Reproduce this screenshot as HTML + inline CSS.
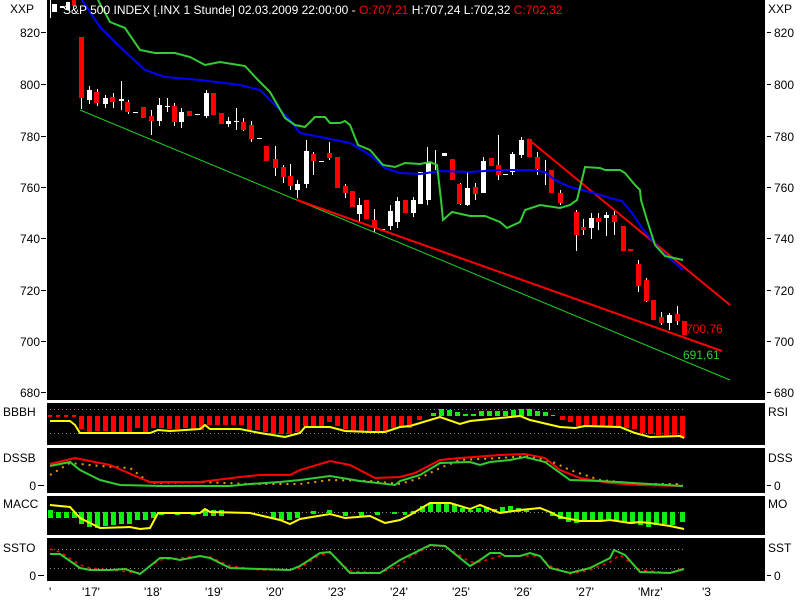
<!DOCTYPE html>
<html><head><meta charset="utf-8"><style>
html,body{margin:0;padding:0;background:#fff;width:800px;height:600px;overflow:hidden}
svg{display:block}
text{font-family:"Liberation Sans",sans-serif;font-size:12px}
</style></head><body>
<svg width="800" height="600" viewBox="0 0 800 600" xmlns="http://www.w3.org/2000/svg">
<rect width="800" height="600" fill="#fff"/>
<!-- panels -->
<rect x="47" y="0" width="718" height="400" fill="#000"/>
<rect x="47" y="403" width="718" height="42" fill="#000"/>
<rect x="47" y="448" width="718" height="45" fill="#000"/>
<rect x="47" y="496" width="718" height="39" fill="#000"/>
<rect x="47" y="538" width="718" height="43" fill="#000"/>

<!-- left axis labels -->
<g fill="#000" text-anchor="end">
<text x="40" y="37">820</text><text x="40" y="89">800</text><text x="40" y="141">780</text>
<text x="40" y="192">760</text><text x="40" y="243">740</text><text x="40" y="295">720</text>
<text x="40" y="346">700</text><text x="40" y="397">680</text>
<text x="36" y="580">0</text><text x="36" y="490">0</text>
</g>
<g stroke="#000" stroke-width="1">
<line x1="41" y1="32.5" x2="46" y2="32.5"/><line x1="41" y1="84.5" x2="46" y2="84.5"/><line x1="41" y1="136.5" x2="46" y2="136.5"/>
<line x1="41" y1="187.5" x2="46" y2="187.5"/><line x1="41" y1="238.5" x2="46" y2="238.5"/><line x1="41" y1="290.5" x2="46" y2="290.5"/>
<line x1="41" y1="341.5" x2="46" y2="341.5"/><line x1="41" y1="392.5" x2="46" y2="392.5"/>
<line x1="38" y1="575.5" x2="44" y2="575.5"/><line x1="38" y1="485.5" x2="44" y2="485.5"/>
<line x1="767" y1="32.5" x2="771" y2="32.5"/><line x1="767" y1="84.5" x2="771" y2="84.5"/><line x1="767" y1="136.5" x2="771" y2="136.5"/>
<line x1="767" y1="187.5" x2="771" y2="187.5"/><line x1="767" y1="238.5" x2="771" y2="238.5"/><line x1="767" y1="290.5" x2="771" y2="290.5"/>
<line x1="767" y1="341.5" x2="771" y2="341.5"/><line x1="767" y1="392.5" x2="771" y2="392.5"/>
<line x1="767" y1="575.5" x2="771" y2="575.5"/><line x1="767" y1="485.5" x2="771" y2="485.5"/>
</g>
<g fill="#000">
<text x="774" y="37">820</text><text x="774" y="89">800</text><text x="774" y="141">780</text>
<text x="774" y="192">760</text><text x="774" y="243">740</text><text x="774" y="295">720</text>
<text x="774" y="346">700</text><text x="774" y="397">680</text>
<text x="774" y="580">0</text><text x="774" y="490">0</text>
<text x="10" y="13">XXP</text><text x="768" y="13">XXP</text>
<text x="3" y="416">BBBH</text><text x="768" y="416">RSI</text>
<text x="3" y="462">DSSB</text><text x="768" y="462">DSS</text>
<text x="3" y="508">MACC</text><text x="768" y="508">MO</text>
<text x="3" y="552">SSTO</text><text x="768" y="552">SST</text>
<text x="82" y="596">'17'</text><text x="144" y="596">'18'</text><text x="205" y="596">'19'</text>
<text x="266" y="596">'20'</text><text x="328" y="596">'23'</text><text x="390" y="596">'24'</text>
<text x="452" y="596">'25'</text><text x="514" y="596">'26'</text><text x="576" y="596">'27'</text>
<text x="638" y="596">'Mrz'</text><text x="702" y="596">'3</text>
<text x="49" y="596">'</text>
</g>

<!-- candles wicks -->
<g stroke="#fff" stroke-width="1">
<line x1="50.5" y1="0" x2="50.5" y2="18"/><line x1="81.5" y1="37" x2="81.5" y2="109"/><line x1="89.5" y1="86" x2="89.5" y2="104"/>
<line x1="97.5" y1="89" x2="97.5" y2="106"/><line x1="105.5" y1="95" x2="105.5" y2="108"/><line x1="113.5" y1="93" x2="113.5" y2="108"/>
<line x1="121.5" y1="81" x2="121.5" y2="110"/><line x1="128.5" y1="100" x2="128.5" y2="114"/><line x1="151.5" y1="110" x2="151.5" y2="135"/>
<line x1="159.5" y1="98" x2="159.5" y2="126"/><line x1="167.5" y1="98" x2="167.5" y2="112"/><line x1="174.5" y1="103" x2="174.5" y2="126"/>
<line x1="181.5" y1="108" x2="181.5" y2="128"/><line x1="206.5" y1="90" x2="206.5" y2="118"/><line x1="228.5" y1="117" x2="228.5" y2="127"/>
<line x1="236.5" y1="108" x2="236.5" y2="130"/><line x1="243.5" y1="118" x2="243.5" y2="131"/><line x1="251.5" y1="121" x2="251.5" y2="142"/>
<line x1="275.5" y1="146" x2="275.5" y2="176"/><line x1="283.5" y1="165" x2="283.5" y2="183"/><line x1="290.5" y1="164" x2="290.5" y2="190"/>
<line x1="297.5" y1="180" x2="297.5" y2="198"/><line x1="306.5" y1="140" x2="306.5" y2="188"/><line x1="313.5" y1="152" x2="313.5" y2="175"/>
<line x1="329.5" y1="142" x2="329.5" y2="160"/><line x1="345.5" y1="184" x2="345.5" y2="198"/><line x1="359.5" y1="198" x2="359.5" y2="222"/>
<line x1="374.5" y1="209" x2="374.5" y2="232"/><line x1="390.5" y1="205" x2="390.5" y2="230"/><line x1="397.5" y1="197" x2="397.5" y2="228"/>
<line x1="413.5" y1="197" x2="413.5" y2="217"/><line x1="427.5" y1="147" x2="427.5" y2="205"/><line x1="435.5" y1="150" x2="435.5" y2="170"/>
<line x1="460.5" y1="183" x2="460.5" y2="205"/><line x1="467.5" y1="172" x2="467.5" y2="206"/><line x1="475.5" y1="183" x2="475.5" y2="200"/>
<line x1="483.5" y1="157" x2="483.5" y2="193"/><line x1="498.5" y1="135" x2="498.5" y2="180"/><line x1="512.5" y1="152" x2="512.5" y2="175"/>
<line x1="521.5" y1="137" x2="521.5" y2="158"/><line x1="537.5" y1="152" x2="537.5" y2="175"/><line x1="545.5" y1="160" x2="545.5" y2="185"/>
<line x1="560.5" y1="190" x2="560.5" y2="205"/><line x1="576.5" y1="210" x2="576.5" y2="251"/><line x1="583.5" y1="219" x2="583.5" y2="235"/>
<line x1="591.5" y1="213" x2="591.5" y2="239"/><line x1="598.5" y1="213" x2="598.5" y2="230"/><line x1="606.5" y1="212" x2="606.5" y2="236"/>
<line x1="614.5" y1="211" x2="614.5" y2="235"/><line x1="638.5" y1="260" x2="638.5" y2="292"/><line x1="646.5" y1="278" x2="646.5" y2="302"/>
<line x1="661.5" y1="312" x2="661.5" y2="325"/><line x1="669.5" y1="313" x2="669.5" y2="330"/><line x1="677.5" y1="306" x2="677.5" y2="325"/>
</g>
<g fill="#fff">
<rect x="52" y="4" width="5" height="8"/><rect x="60" y="6" width="4" height="2"/><rect x="66" y="2" width="4" height="8"/>
<rect x="87" y="90" width="5" height="10"/><rect x="103" y="98" width="5" height="6"/><rect x="119" y="99" width="5" height="2"/>
<rect x="133" y="112" width="5" height="1"/><rect x="157" y="105" width="5" height="16"/><rect x="165" y="106" width="5" height="1"/>
<rect x="179" y="112" width="5" height="10"/><rect x="195" y="114" width="5" height="1"/><rect x="204" y="93" width="5" height="23"/>
<rect x="226" y="121" width="5" height="3"/><rect x="234" y="121" width="5" height="1"/><rect x="257" y="138" width="5" height="1"/>
<rect x="295" y="184" width="5" height="6"/><rect x="304" y="151" width="5" height="33"/><rect x="319" y="161" width="5" height="1"/>
<rect x="357" y="205" width="5" height="9"/><rect x="380" y="229" width="5" height="1"/><rect x="388" y="211" width="5" height="15"/>
<rect x="395" y="201" width="5" height="21"/><rect x="411" y="200" width="5" height="13"/><rect x="418" y="172" width="5" height="32"/>
<rect x="426" y="163" width="5" height="37"/><rect x="442" y="153" width="5" height="3"/><rect x="465" y="188" width="5" height="17"/>
<rect x="481" y="161" width="5" height="32"/><rect x="503" y="174" width="5" height="1"/><rect x="510" y="154" width="5" height="18"/>
<rect x="519" y="140" width="5" height="15"/><rect x="589" y="218" width="5" height="10"/><rect x="604" y="215" width="5" height="3"/>
<rect x="667" y="315" width="5" height="8"/>
</g>
<g fill="#f00">
<rect x="72" y="0" width="4" height="6"/><rect x="79" y="37" width="5" height="61"/><rect x="94" y="92" width="5" height="11"/>
<rect x="110" y="97" width="5" height="5"/><rect x="125" y="102" width="5" height="10"/><rect x="141" y="107" width="5" height="11"/>
<rect x="149" y="116" width="5" height="5"/><rect x="172" y="106" width="5" height="16"/><rect x="187" y="111" width="5" height="5"/>
<rect x="211" y="93" width="5" height="22"/><rect x="219" y="113" width="5" height="11"/><rect x="241" y="122" width="5" height="8"/>
<rect x="249" y="125" width="5" height="14"/><rect x="264" y="146" width="5" height="15"/><rect x="273" y="159" width="5" height="9"/>
<rect x="281" y="167" width="5" height="10"/><rect x="288" y="176" width="5" height="10"/><rect x="311" y="154" width="5" height="7"/>
<rect x="327" y="153" width="5" height="5"/><rect x="335" y="157" width="5" height="31"/><rect x="343" y="186" width="5" height="7"/>
<rect x="350" y="191" width="5" height="16"/><rect x="364" y="200" width="5" height="19"/><rect x="372" y="220" width="5" height="8"/>
<rect x="403" y="200" width="5" height="13"/><rect x="450" y="159" width="5" height="21"/><rect x="457" y="184" width="5" height="20"/>
<rect x="473" y="187" width="5" height="7"/><rect x="489" y="158" width="5" height="8"/><rect x="496" y="165" width="5" height="10"/>
<rect x="527" y="139" width="5" height="18"/><rect x="535" y="157" width="5" height="12"/><rect x="549" y="170" width="5" height="23"/>
<rect x="558" y="193" width="5" height="10"/><rect x="574" y="212" width="5" height="23"/><rect x="581" y="227" width="5" height="3"/>
<rect x="596" y="218" width="5" height="4"/><rect x="612" y="215" width="5" height="7"/><rect x="621" y="226" width="5" height="25"/>
<rect x="628" y="249" width="5" height="2"/><rect x="636" y="264" width="5" height="22"/><rect x="644" y="280" width="5" height="21"/>
<rect x="651" y="300" width="5" height="20"/><rect x="659" y="317" width="5" height="6"/><rect x="675" y="314" width="5" height="7"/>
<rect x="682" y="321" width="5" height="14"/>
</g>

<!-- trend lines -->
<line x1="80" y1="110" x2="730" y2="380" stroke="#2c2" stroke-width="1"/>
<line x1="297" y1="200" x2="722" y2="351" stroke="#f00" stroke-width="2"/>
<line x1="528" y1="139" x2="730" y2="305" stroke="#f00" stroke-width="2"/>
<polyline fill="none" stroke="#00f" stroke-width="2" points="82,0 100,27 118,45 145,70 165,77 200,80 240,85 260,90 275,105 290,120 300,133 320,137 350,143 370,155 385,168 400,173 420,174 440,171 470,172 500,170 530,170 545,172 555,180 570,187 590,192 610,198 622,201 632,213 642,228 660,250 683,270"/>
<polyline fill="none" stroke="#3c3" stroke-width="2" points="98,0 110,22 125,28 140,50 155,53 175,53 190,57 205,65 220,62 245,66 258,80 270,92 285,118 295,125 305,127 315,117 325,117 330,123 340,123 345,121 350,125 358,145 370,150 383,165 395,167 405,163 420,164 430,162 437,165 441,200 443,220 452,212 470,216 485,216 500,222 507,228 520,222 525,210 540,205 560,208 570,205 577,200 585,167 600,168 605,170 620,170 625,173 635,185 640,190 641,200 647,220 655,245 665,256 683,260"/>
<text x="686" y="333" fill="#f00">700,76</text>
<text x="683" y="359" fill="#3c3">691,61</text>

<!-- title -->
<text x="63" y="14" fill="#fff">S&amp;P 500 INDEX [.INX  1 Stunde] 02.03.2009 22:00:00 - <tspan fill="#f00">O:707,21</tspan> H:707,24 L:702,32 <tspan fill="#f00">C:702,32</tspan></text>

<!-- BBBH -->
<g stroke="#888" stroke-width="1" stroke-dasharray="1,3">
<line x1="50" y1="409.5" x2="685" y2="409.5"/><line x1="50" y1="433.5" x2="685" y2="433.5"/>
<line x1="50" y1="512.5" x2="685" y2="512.5"/>
<line x1="50" y1="549.5" x2="685" y2="549.5"/><line x1="50" y1="568.5" x2="685" y2="568.5"/>
</g>
<g fill="#f00">
<rect x="48" y="415" width="4" height="2"/><rect x="56" y="415" width="4" height="2"/><rect x="64" y="415" width="4" height="2"/><rect x="72" y="415" width="4" height="2"/>
<rect x="79" y="416" width="5" height="13"/><rect x="87" y="416" width="5" height="17"/><rect x="95" y="416" width="5" height="15"/><rect x="103" y="416" width="5" height="15"/>
<rect x="111" y="416" width="5" height="16"/><rect x="119" y="416" width="5" height="16"/><rect x="127" y="416" width="5" height="16"/><rect x="135" y="416" width="5" height="12"/>
<rect x="143" y="416" width="5" height="16"/><rect x="151" y="416" width="5" height="12"/><rect x="159" y="416" width="5" height="12"/><rect x="167" y="416" width="5" height="13"/>
<rect x="175" y="416" width="5" height="13"/><rect x="183" y="416" width="5" height="12"/><rect x="191" y="416" width="5" height="13"/><rect x="199" y="416" width="5" height="14"/>
<rect x="207" y="416" width="5" height="9"/><rect x="215" y="416" width="5" height="9"/><rect x="223" y="416" width="5" height="9"/><rect x="231" y="416" width="5" height="9"/>
<rect x="239" y="416" width="5" height="9"/><rect x="247" y="416" width="5" height="14"/><rect x="255" y="416" width="5" height="14"/><rect x="263" y="416" width="5" height="16"/>
<rect x="271" y="416" width="5" height="18"/><rect x="279" y="416" width="5" height="18"/><rect x="287" y="416" width="5" height="18"/><rect x="295" y="416" width="5" height="16"/>
<rect x="303" y="416" width="5" height="10"/><rect x="311" y="416" width="5" height="10"/><rect x="319" y="416" width="5" height="10"/><rect x="327" y="416" width="5" height="6"/>
<rect x="335" y="416" width="5" height="10"/><rect x="343" y="416" width="5" height="13"/><rect x="351" y="416" width="5" height="16"/><rect x="359" y="416" width="5" height="15"/>
<rect x="367" y="416" width="5" height="15"/><rect x="375" y="416" width="5" height="16"/><rect x="383" y="416" width="5" height="16"/><rect x="391" y="416" width="5" height="12"/>
<rect x="399" y="416" width="5" height="12"/><rect x="407" y="416" width="5" height="12"/><rect x="417" y="416" width="5" height="4"/>
<rect x="560" y="416" width="5" height="4"/><rect x="568" y="416" width="5" height="6"/><rect x="576" y="416" width="5" height="10"/><rect x="584" y="416" width="5" height="10"/>
<rect x="592" y="416" width="5" height="11"/><rect x="600" y="416" width="5" height="11"/><rect x="608" y="416" width="5" height="11"/><rect x="616" y="416" width="5" height="11"/>
<rect x="624" y="416" width="5" height="12"/><rect x="632" y="416" width="5" height="13"/><rect x="640" y="416" width="5" height="17"/><rect x="648" y="416" width="5" height="18"/>
<rect x="656" y="416" width="5" height="19"/><rect x="664" y="416" width="5" height="19"/><rect x="672" y="416" width="5" height="19"/><rect x="680" y="416" width="5" height="22"/>
</g>
<g fill="#1e1">
<rect x="431" y="413" width="5" height="3"/><rect x="439" y="409" width="5" height="7"/><rect x="447" y="410" width="5" height="6"/><rect x="455" y="412" width="5" height="4"/>
<rect x="463" y="414" width="5" height="2"/><rect x="471" y="414" width="5" height="2"/><rect x="479" y="411" width="5" height="5"/><rect x="487" y="411" width="5" height="5"/>
<rect x="495" y="411" width="5" height="5"/><rect x="503" y="411" width="5" height="5"/><rect x="511" y="410" width="5" height="6"/><rect x="519" y="409" width="5" height="7"/>
<rect x="527" y="409" width="5" height="7"/><rect x="535" y="411" width="5" height="5"/><rect x="543" y="412" width="5" height="4"/><rect x="551" y="415" width="4" height="1"/>
</g>
<polyline fill="none" stroke="#ff0" stroke-width="2" points="50,421 70,421 75,425 80,433 100,433 150,433 158,430 170,431 200,429 205,425 210,429 240,429 260,433 285,437 300,433 305,427 330,427 345,431 370,432 385,432 400,427 410,426 420,423 440,417 460,424 470,421 520,416 530,420 560,427 575,428 585,426 620,427 635,433 650,437 680,436 684,438"/>

<!-- DSSB -->
<polyline fill="none" stroke="#e90" stroke-width="2" stroke-dasharray="2,5" points="50,475 70,463 100,466 130,468 150,483 200,482 250,484 300,484 330,480 370,481 400,484 420,478 440,468 460,460 500,458 530,456 555,463 570,470 600,480 640,484 683,484"/>
<polyline fill="none" stroke="#f00" stroke-width="2" points="50,464 75,458 110,465 140,478 150,482 200,482 240,477 260,475 290,475 300,470 330,461 350,465 375,478 400,477 415,473 440,460 460,458 500,455 525,454 545,458 560,470 580,478 610,483 640,485 683,486"/>
<polyline fill="none" stroke="#3c3" stroke-width="2" points="50,466 70,462 80,470 100,480 120,485 160,486 200,486 230,486 250,484 280,482 300,480 330,476 360,481 395,485 400,481 420,475 440,463 470,462 480,465 490,462 510,460 525,457 545,462 570,480 600,481 683,486"/>

<!-- MACC -->
<g fill="#1e1">
<rect x="48" y="510" width="5" height="8"/><rect x="56" y="512" width="5" height="6"/><rect x="64" y="512" width="5" height="6"/><rect x="72" y="512" width="5" height="6"/>
<rect x="79" y="512" width="5" height="12"/><rect x="87" y="512" width="5" height="15"/><rect x="95" y="512" width="5" height="16"/><rect x="103" y="512" width="5" height="14"/>
<rect x="111" y="512" width="5" height="13"/><rect x="119" y="512" width="5" height="12"/><rect x="127" y="512" width="5" height="12"/><rect x="135" y="512" width="5" height="8"/>
<rect x="143" y="512" width="5" height="8"/><rect x="151" y="512" width="5" height="6"/>
<rect x="159" y="512" width="5" height="3"/><rect x="175" y="512" width="5" height="3"/><rect x="191" y="512" width="5" height="3"/><rect x="203" y="509" width="5" height="7"/>
<rect x="211" y="510" width="5" height="6"/><rect x="219" y="510" width="5" height="6"/><rect x="271" y="512" width="5" height="6"/><rect x="279" y="512" width="5" height="8"/>
<rect x="287" y="512" width="5" height="8"/><rect x="295" y="512" width="5" height="6"/><rect x="311" y="511" width="5" height="3"/><rect x="327" y="510" width="5" height="3"/>
<rect x="343" y="512" width="5" height="4"/><rect x="359" y="512" width="5" height="4"/><rect x="375" y="512" width="5" height="3"/><rect x="392" y="512" width="5" height="2"/>
<rect x="403" y="512" width="4" height="3"/><rect x="411" y="511" width="5" height="3"/><rect x="420" y="506" width="5" height="6"/><rect x="428" y="503" width="5" height="9"/>
<rect x="436" y="502" width="5" height="10"/><rect x="444" y="502" width="5" height="10"/><rect x="452" y="504" width="5" height="8"/><rect x="460" y="508" width="5" height="4"/>
<rect x="468" y="510" width="5" height="2"/><rect x="476" y="508" width="5" height="4"/><rect x="484" y="507" width="5" height="5"/><rect x="492" y="509" width="5" height="3"/>
<rect x="500" y="507" width="5" height="5"/><rect x="508" y="506" width="5" height="6"/><rect x="516" y="508" width="5" height="4"/><rect x="524" y="509" width="5" height="3"/>
<rect x="550" y="512" width="5" height="4"/><rect x="558" y="512" width="5" height="7"/><rect x="566" y="512" width="5" height="10"/><rect x="574" y="512" width="5" height="11"/>
<rect x="582" y="512" width="5" height="10"/><rect x="590" y="512" width="5" height="9"/><rect x="598" y="512" width="5" height="8"/><rect x="606" y="512" width="5" height="7"/>
<rect x="614" y="512" width="5" height="9"/><rect x="622" y="512" width="5" height="10"/><rect x="630" y="512" width="5" height="12"/><rect x="638" y="512" width="5" height="13"/>
<rect x="646" y="512" width="5" height="15"/><rect x="654" y="512" width="5" height="13"/><rect x="662" y="512" width="5" height="12"/><rect x="670" y="512" width="5" height="13"/>
<rect x="680" y="512" width="5" height="10"/>
</g>
<polyline fill="none" stroke="#ff0" stroke-width="2" points="50,505 70,507 80,518 100,528 130,527 140,529 150,528 158,513 200,513 205,509 210,512 250,513 280,520 290,524 300,519 330,514 345,518 370,516 385,523 400,520 410,515 430,503 450,503 470,509 480,505 500,513 520,510 540,508 550,512 560,517 580,521 600,521 610,520 630,523 640,522 650,523 670,526 684,529"/>

<!-- SSTO -->
<polyline fill="none" stroke="#f00" stroke-width="1.5" stroke-dasharray="3,4" points="50,549 60,552 80,565 90,568 110,570 140,573 160,560 200,556 210,557 230,566 260,570 290,570 300,568 320,555 330,553 350,571 380,573 400,565 410,557 430,546 445,546 470,562 480,562 500,556 540,556 550,566 570,574 590,570 610,562 620,555 640,570 670,573 684,568"/>
<polyline fill="none" stroke="#3c3" stroke-width="2" points="50,554 60,554 80,568 90,570 110,570 125,569 140,574 160,558 170,558 180,560 200,556 210,558 230,568 260,569 290,570 300,566 320,553 330,552 350,573 380,573 400,560 410,555 430,545 445,546 470,566 480,560 490,553 500,553 505,556 520,556 530,553 540,556 550,568 570,573 590,568 610,558 614,550 625,555 640,572 670,573 684,569"/>
</svg>
</body></html>
